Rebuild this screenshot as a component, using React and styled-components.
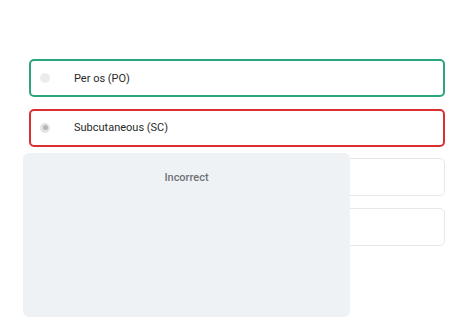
import React from "react";
import styled, { createGlobalStyle } from "styled-components";

const options = [
  { label: "Per os (PO)", state: "correct" },
  { label: "Subcutaneous (SC)", state: "wrong", checked: true },
  { label: "", state: "idle" },
  { label: "", state: "idle" },
];

const App = () => {
  return (
    <>
      <GlobalStyle />
      <Page>
        <OptionList>
          {options.map((o, i) => (
            <Option key={i} state={o.state}>
              <Radio checked={o.checked} />
              <OptionLabel>{o.label}</OptionLabel>
            </Option>
          ))}
        </OptionList>
        <Feedback>
          <FeedbackTitle>Incorrect</FeedbackTitle>
        </Feedback>
      </Page>
    </>
  );
};

const GlobalStyle = createGlobalStyle`
  body {
    margin: 0;
    background: #ffffff;
    font-family: Roboto, "Liberation Sans", sans-serif;
  }
`;

const Page = styled.div`
  position: relative;
  width: 474px;
  height: 324px;
  box-sizing: border-box;
  padding: 59px 29px 0 29px;
  overflow: hidden;
`;

const OptionList = styled.div`
  display: flex;
  flex-direction: column;
  gap: 11.6px;
`;

const borderFor = (state) =>
  state === "correct" ? "#2ba57f" : state === "wrong" ? "#dc2f34" : "#e6e8eb";

const Option = styled.div`
  display: flex;
  align-items: center;
  gap: 24px;
  height: 38px;
  box-sizing: border-box;
  padding-left: 9px;
  border: ${(p) => (p.state === "idle" ? "1.5px" : "2px")} solid
    ${(p) => borderFor(p.state)};
  border-radius: 5px;
  background: #fff;
`;

const Radio = styled.span`
  position: relative;
  width: 10px;
  height: 10px;
  border-radius: 50%;
  background: ${(p) => (p.checked ? "#e3e3e3" : "#ececec")};
  flex-shrink: 0;

  &::after {
    content: "";
    display: ${(p) => (p.checked ? "block" : "none")};
    position: absolute;
    left: 2.5px;
    top: 2.5px;
    width: 5px;
    height: 5px;
    border-radius: 50%;
    background: #b5b5b5;
  }
`;

const OptionLabel = styled.span`
  font-size: 11px;
  color: #2a2a2a;
`;

const Feedback = styled.div`
  position: absolute;
  left: 23px;
  top: 153px;
  width: 327px;
  height: 164px;
  border-radius: 6px;
  background: #eef2f5;
  display: flex;
  justify-content: center;
  padding-top: 18px;
  box-sizing: border-box;
`;

const FeedbackTitle = styled.div`
  font-size: 11px;
  font-weight: 500;
  color: #6e7378;
`;

export default App;
